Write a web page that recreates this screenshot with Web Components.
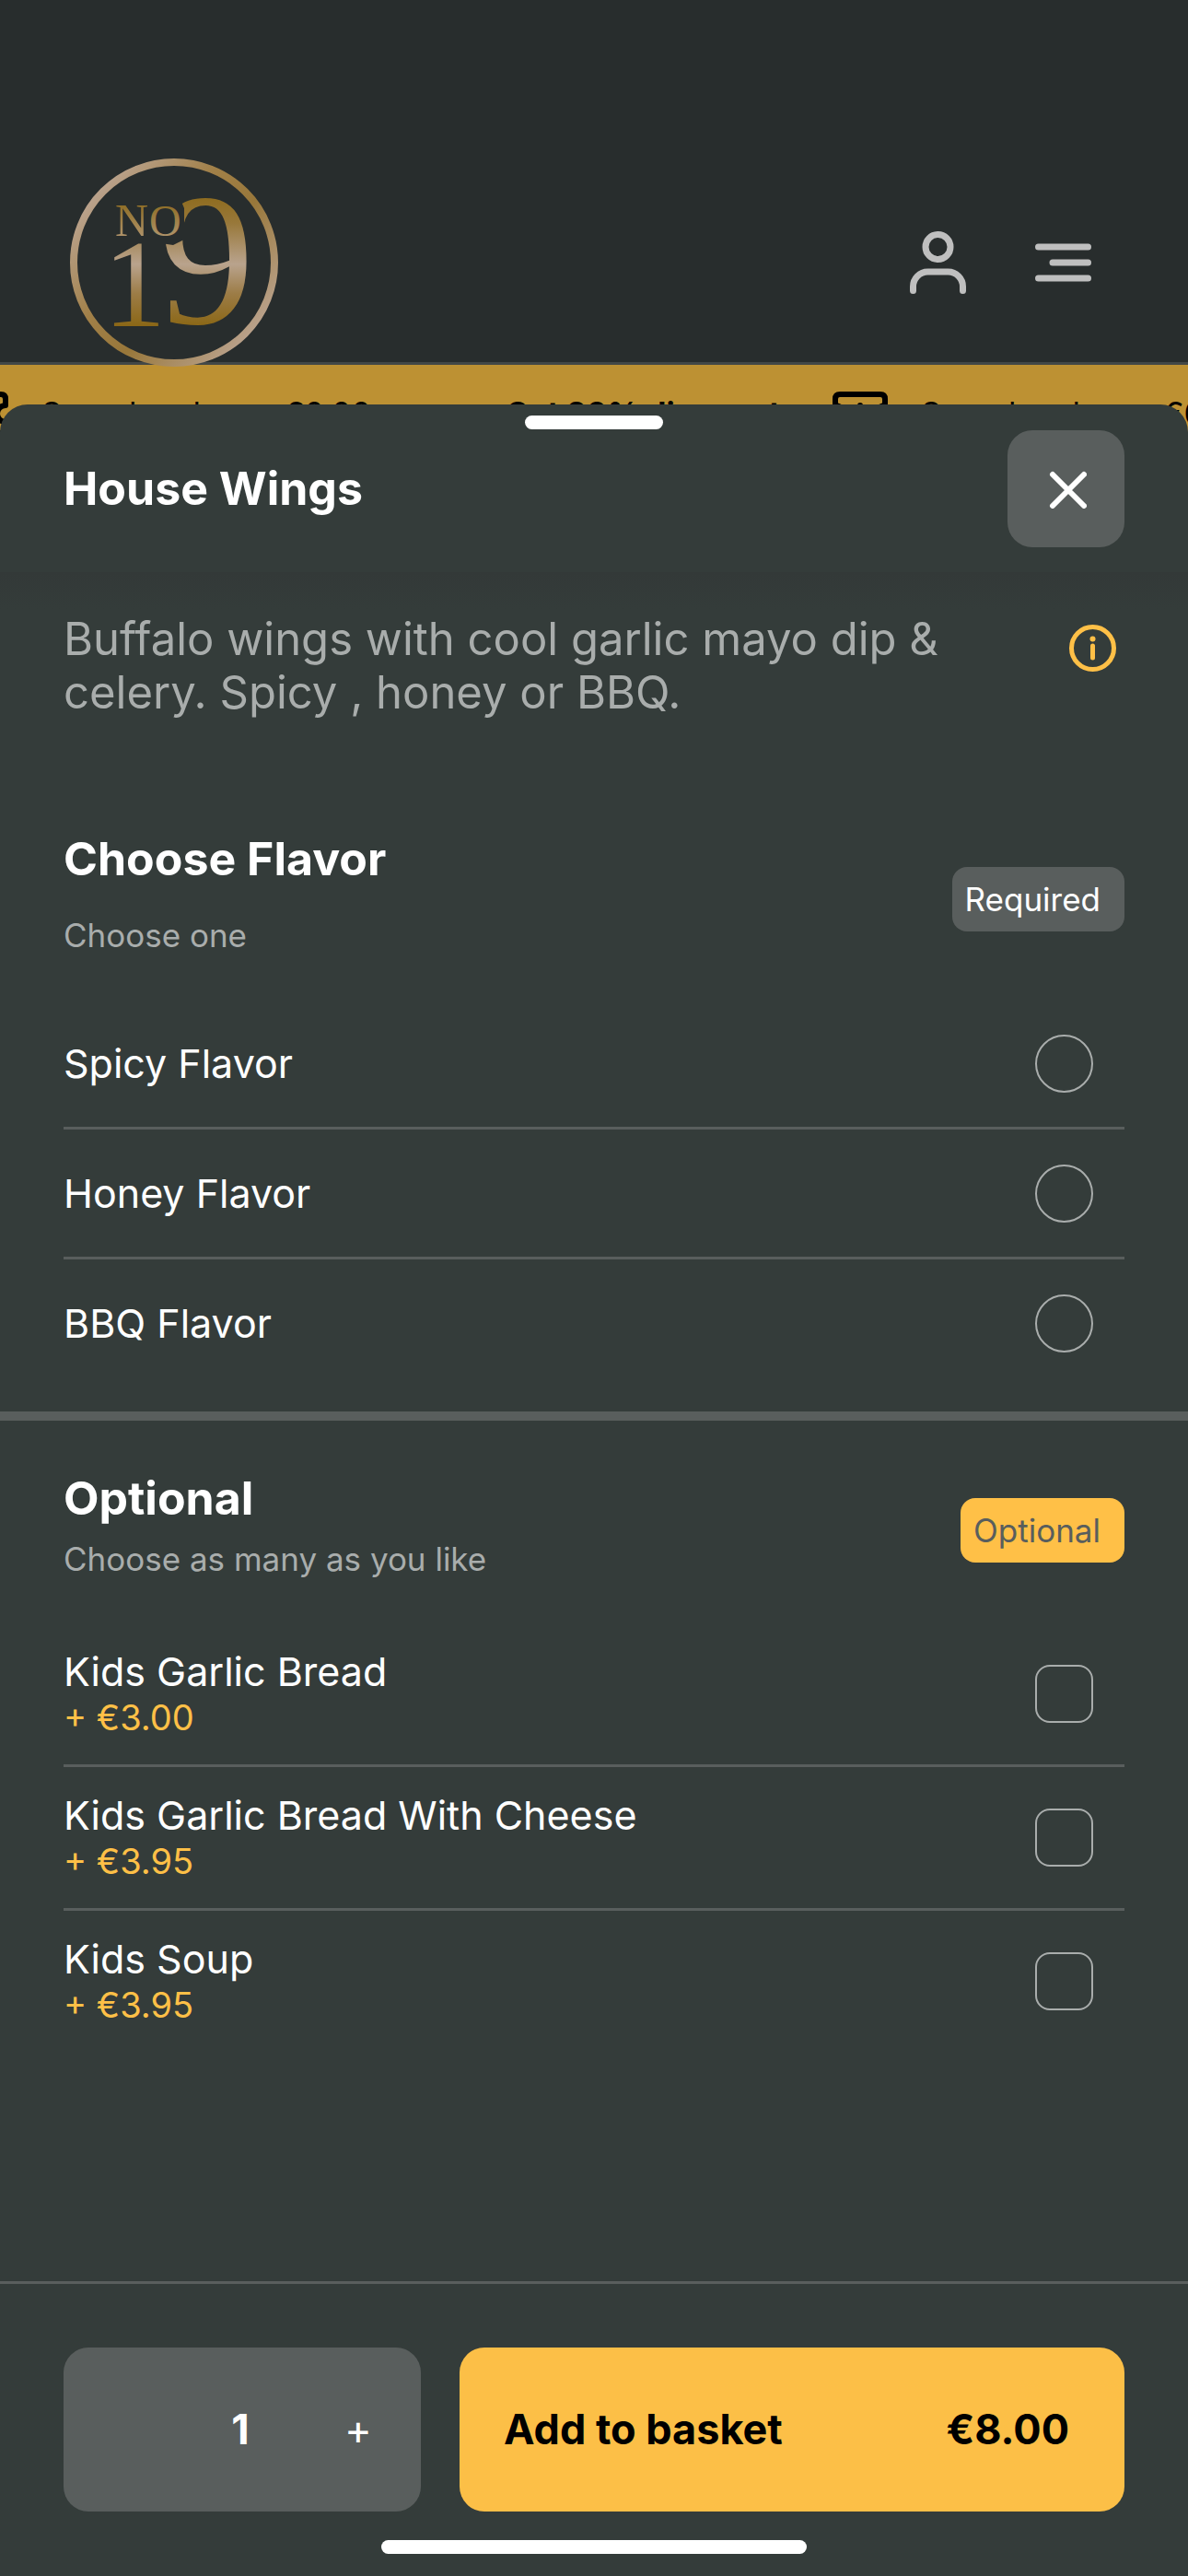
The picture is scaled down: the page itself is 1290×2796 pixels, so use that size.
<!DOCTYPE html>
<html lang="en">
<head>
<meta charset="utf-8">
<meta name="viewport" content="width=device-width, initial-scale=1">
<title>House Wings</title>
<style>
  :root {
    --sheet: #343c3a;
    --panel: #595e5d;
    --accent: #ffc047;
    --muted: #a9adac;
    --edge: 69px;
  }
  * { box-sizing: border-box; }
  body {
    margin: 0;
    background: #282d2d;
    color: #fff;
    font-family: Inter, "Liberation Sans", sans-serif;
  }
</style>
</head>
<body>
<order-page></order-page>

<script>
const define = (name, html, setup) => {
  const template = document.createElement('template');
  template.innerHTML = `<style>
    *, :host { box-sizing: border-box; }
    h1, h2, p, fieldset { margin: 0; padding: 0; border: 0; min-width: 0; }
    button { font: inherit; color: inherit; background: none; border: 0; padding: 0; margin: 0; }
    svg { display: block; }
  </style>` + html;
  customElements.define(name, class extends HTMLElement {
    constructor() {
      super();
      this.attachShadow({ mode: 'open' }).append(template.content.cloneNode(true));
    }
    connectedCallback() {
      if (setup && !this.ready) setup(this, this.shadowRoot);
      this.ready = true;
    }
  });
};

define('brand-logo', `
  <style>
    :host { display: block; }
    text { font-family: "Liberation Serif", serif; }
  </style>
  <svg width="227" height="226" viewBox="0 0 227 226" role="img" aria-label="No 19">
    <defs>
      <linearGradient id="ring" x1="30" y1="40" x2="200" y2="185" gradientUnits="userSpaceOnUse">
        <stop offset="0" stop-color="#b9a18a"/>
        <stop offset=".35" stop-color="#a18048"/>
        <stop offset=".6" stop-color="#98773a"/>
        <stop offset="1" stop-color="#b9a18a"/>
      </linearGradient>
      <linearGradient id="digits" x1="0" y1="42" x2="0" y2="182" gradientUnits="userSpaceOnUse">
        <stop offset="0" stop-color="#8f6c1f"/>
        <stop offset=".2" stop-color="#98783a"/>
        <stop offset=".52" stop-color="#b9a38d"/>
        <stop offset=".75" stop-color="#9c7c46"/>
        <stop offset="1" stop-color="#8b6716"/>
      </linearGradient>
      <linearGradient id="small" x1="0" y1="50" x2="0" y2="86" gradientUnits="userSpaceOnUse">
        <stop offset="0" stop-color="#8f6e26"/>
        <stop offset="1" stop-color="#b0946c"/>
      </linearGradient>
      <mask id="cut">
        <rect width="227" height="226" fill="#fff"/>
        <path d="M70 30H114L124 54V88L112 94L86 90H70Z" fill="#000"/>
      </mask>
    </defs>
    <circle cx="113" cy="113" r="109" fill="none" stroke="url(#ring)" stroke-width="8"/>
    <g mask="url(#cut)">
      <text x="97" y="179" font-size="206" fill="url(#digits)">9</text>
    </g>
    <text x="36" y="182" font-size="136" fill="url(#digits)">1</text>
    <text x="49" y="84" font-size="50" fill="url(#small)">N</text>
    <text x="86" y="84" font-size="48" fill="url(#small)">O</text>
  </svg>`);

define('site-header', `
  <style>
    :host { display: block; position: relative; z-index: 1; padding-top: 176px; border-bottom: 3px solid #434847; background: #282d2d; }
    .row { display: flex; align-items: center; justify-content: space-between; min-height: 217px; padding: 0 105px 0 76px; }
    brand-logo { margin: -5px 0; }
    nav { display: flex; align-items: center; gap: 75px; color: #bfbfbf; }
    svg { fill: none; stroke: currentColor; stroke-width: 7; stroke-linecap: round; }
  </style>
  <div class="row">
    <brand-logo></brand-logo>
    <nav>
      <button aria-label="Account"><svg width="61" height="68" viewBox="0 0 61 68">
        <circle cx="30.500" cy="17" r="13.500"/><path d="M3.500 64.500V60A16 16 0 0 1 19.500 44H41.500A16 16 0 0 1 57.500 60V64.500"/></svg></button>
      <button aria-label="Menu"><svg width="61" height="42" viewBox="0 0 61 42">
        <path d="M3.500 4H57.500M19 21H57.500M3.500 38H57.500"/></svg></button>
    </nav>
  </div>`);

define('offer-banner', `
  <style>
    :host { display: block; overflow: hidden; height: 106px; background: #bd9133; color: #000; }
    .track { display: flex; align-items: center; height: 100%; margin-left: -51px; white-space: nowrap; font-size: 34px; line-height: 44px; }
    .deal { display: flex; align-items: center; flex: none; width: 955px; }
    svg { flex: none; margin-right: 36px; fill: none; stroke: #000; stroke-width: 6; stroke-linejoin: round; stroke-linecap: round; }
    .gap { flex: none; width: 146px; }
    strong { font-weight: 700; }
  </style>
  <div class="track"></div>`, (host, root) => {
    const deal = `<div class="deal">
      <svg width="60" height="48" viewBox="0 0 60 48"><path d="M8 3H52Q57 3 57 8V15A9 9 0 0 0 57 33V40Q57 45 52 45H8Q3 45 3 40V33A9 9 0 0 0 3 15V8Q3 3 8 3Z"/><path d="M30 15V33"/></svg>
      <span>Spend and over €0.00</span><span class="gap"></span><strong>Get 20% discount</strong></div>`;
    root.querySelector('.track').innerHTML = deal + deal;
  });

define('sheet-header', `
  <style>
    :host { display: flex; align-items: center; justify-content: space-between; padding: 28px var(--edge) 27px; position: relative; }
    .grip { position: absolute; top: 12px; left: 50%; width: 150px; height: 15px; margin-left: -75px; border-radius: 8px; background: #fff; }
    h1 { font-size: 50px; line-height: 60px; font-weight: 700; padding-bottom: 2px; }
    button { display: grid; place-items: center; width: 127px; height: 127px; border-radius: 27px; background: var(--panel); }
    svg { fill: none; stroke: #fff; stroke-width: 6; stroke-linecap: round; }
  </style>
  <span class="grip"></span>
  <h1><slot></slot></h1>
  <button aria-label="Close"><svg width="44" height="42" viewBox="0 0 44 42"><path d="M7 5L41 39M41 5L7 39"/></svg></button>`);

define('dish-summary', `
  <style>
    :host { display: flex; align-items: flex-start; justify-content: space-between; gap: 60px; padding: 44px 78px 125px var(--edge);
      background: linear-gradient(#333938, var(--sheet) 40px); }
    p { flex: 1; max-width: 980px; font-size: 49px; line-height: 58px; color: var(--muted); }
    button { flex: none; margin-top: 13px; }
  </style>
  <p><slot></slot></p>
  <button aria-label="Allergen information"><svg width="51" height="51" viewBox="0 0 51 51">
    <circle cx="25.500" cy="25.500" r="23" fill="none" stroke="#ffc047" stroke-width="5"/>
    <path d="M25.500 23V36" stroke="#ffc047" stroke-width="5" stroke-linecap="round"/><circle cx="25.500" cy="15.500" r="3" fill="#ffc047"/></svg></button>`);

define('option-group', `
  <style>
    :host { display: block; padding: 0 var(--edge); }
    .head { display: flex; align-items: center; justify-content: space-between; margin-bottom: 40px; }
    .titles { display: flex; flex-direction: column; gap: var(--head-gap, 10px); }
    h2 { font-size: 50px; line-height: 52px; font-weight: 700; }
    .hint { font-size: 35px; line-height: 60px; color: var(--muted); }
    .badge { padding: 0 26px 0 14px; border-radius: 16px; background: var(--badge, var(--panel)); color: var(--badge-text, #fff); font-size: 35px; line-height: 70px; }
    label { box-sizing: content-box; display: flex; align-items: center; justify-content: space-between; min-height: var(--row, 138px); padding-right: 34px; }
    label + label { border-top: 3px solid var(--panel); }
    .text { display: flex; flex-direction: column; font-size: 43px; line-height: 50px; }
    .price { font-size: 38px; color: var(--accent); }
    input { appearance: none; flex: none; width: 63px; height: 63px; margin: 0; border: 2px solid var(--muted); }
    input[type=radio] { border-radius: 50%; }
    input[type=checkbox] { border-radius: 16px; }
    input:checked { background: var(--accent); }
  </style>
  <div class="head">
    <div class="titles"><h2></h2><p class="hint"></p></div>
    <span class="badge"></span>
  </div>
  <fieldset></fieldset>`, (host, root) => {
    const get = n => host.getAttribute(n);
    root.querySelector('h2').textContent = get('heading');
    root.querySelector('.hint').textContent = get('hint');
    root.querySelector('.badge').textContent = get('badge');
    const list = root.querySelector('fieldset');
    list.setAttribute('aria-label', get('heading'));
    for (const item of get('choices').split(';')) {
      const [name, price] = item.split('|');
      const label = document.createElement('label');
      label.innerHTML = `<span class="text"><span>${name}</span>${price ? `<span class="price">+ ${price}</span>` : ''}</span>
        <input type="${get('type')}" name="choice">`;
      list.append(label);
    }
  });

define('basket-bar', `
  <style>
    :host { display: flex; gap: 42px; position: relative; margin-top: auto; padding: 69px var(--edge) 70px; border-top: 3px solid var(--panel); font-size: 45px; line-height: 54px; }
    .stepper { display: grid; grid-template-columns: repeat(3, 1fr); align-items: center; justify-items: center; width: 388px; height: 178px; padding-right: 4px; border-radius: 27px; background: var(--panel); }
    output { font-weight: 700; grid-column: 2; }
    .add { flex: 1; display: flex; align-items: center; justify-content: space-between; height: 178px; padding: 0 60px 0 48px; border-radius: 27px; background: #fcbf47; color: #000; font-weight: 700; }
    .home { position: absolute; bottom: 24px; left: 50%; width: 462px; height: 15px; margin-left: -231px; border-radius: 8px; background: #fff; }
  </style>
  <div class="stepper"><output>1</output><button aria-label="Increase quantity">+</button></div>
  <button class="add"><span>Add to basket</span><span>€8.00</span></button>
  <span class="home"></span>`);

define('order-page', `
  <style>
    :host { display: flex; flex-direction: column; min-height: 100vh; }
    main { flex: 1; display: flex; flex-direction: column; position: relative; z-index: 2; margin-top: -63px; border-radius: 30px 30px 0 0; background: var(--sheet); }
    .flavor { --head-gap: 27px; padding-bottom: 27px; }
    .extras { --badge: var(--accent); --badge-text: var(--panel); --row: 153px; padding-top: 58px; padding-bottom: 40px; border-top: 10px solid var(--panel); }
  </style>
  <site-header></site-header>
  <offer-banner></offer-banner>
  <main>
    <sheet-header>House Wings</sheet-header>
    <dish-summary>Buffalo wings with cool garlic mayo dip &amp; celery. Spicy , honey or BBQ.</dish-summary>
    <option-group class="flavor" type="radio" heading="Choose Flavor" hint="Choose one" badge="Required"
      choices="Spicy Flavor;Honey Flavor;BBQ Flavor"></option-group>
    <option-group class="extras" type="checkbox" heading="Optional" hint="Choose as many as you like" badge="Optional"
      choices="Kids Garlic Bread|€3.00;Kids Garlic Bread With Cheese|€3.95;Kids Soup|€3.95"></option-group>
    <basket-bar></basket-bar>
  </main>
</order-page>`);
</script>
</body>
</html>
